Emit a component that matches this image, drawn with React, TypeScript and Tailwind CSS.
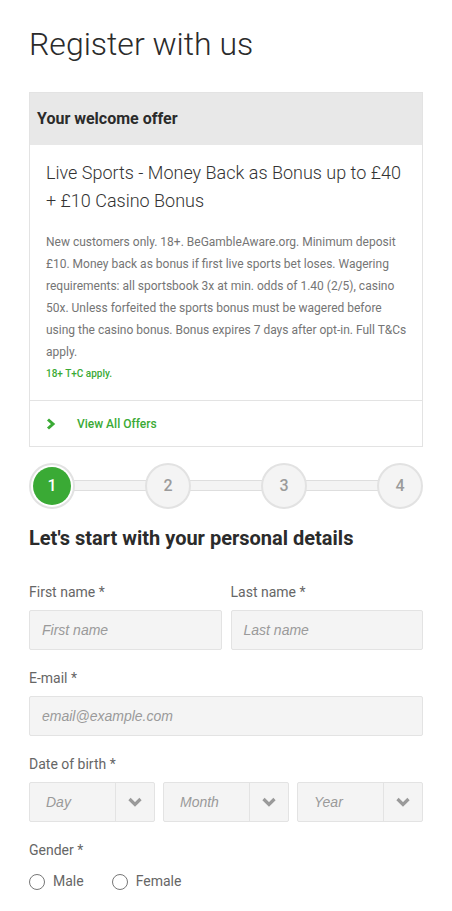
import React from "react";

const Chevron = () => (
  <svg width="14" height="10" viewBox="0 0 14 10" className="block">
    <path d="M1.5 2 L7 7.5 L12.5 2" stroke="#9a9a9a" strokeWidth="3.2" fill="none" strokeLinejoin="miter" />
  </svg>
);

function Select({ label }: { label: string }) {
  return (
    <div className="flex h-10 flex-1 border border-[#e3e3e3] bg-[#f4f4f4] rounded-[2px]">
      <div className="flex flex-1 items-center pl-4 text-[14px] italic text-[#9a9a9a] font-['Liberation_Sans',Arial,sans-serif]">
        {label}
      </div>
      <div className="flex w-[39px] items-center justify-center border-l border-[#e3e3e3]">
        <Chevron />
      </div>
    </div>
  );
}

function Step({ n, active }: { n: number; active?: boolean }) {
  return (
    <div
      className={`relative z-10 flex h-[46px] w-[46px] items-center justify-center rounded-full border-2 border-[#e2e2e2] ${
        active ? "bg-white p-[2px]" : "bg-[#f4f4f4]"
      }`}
    >
      {active ? (
        <div className="flex h-full w-full items-center justify-center rounded-full bg-[#3aaa35] text-[16px] font-medium text-white">
          {n}
        </div>
      ) : (
        <span className="text-[16px] font-medium text-[#9b9b9b]">{n}</span>
      )}
    </div>
  );
}

const inputCls =
  "mt-[8px] flex h-10 items-center rounded-[2px] border border-[#e3e3e3] bg-[#f4f4f4] pl-[12px] text-[14px] italic text-[#9a9a9a] font-['Liberation_Sans',Arial,sans-serif]";

export default function App() {
  return (
    <div className="min-h-[911px] bg-white px-[29px] pt-[24px] font-['Roboto',sans-serif] text-[#333]">
      <h1 className="text-[32px] font-light leading-[40px] text-[#2b2b2b]">Register with us</h1>

      <div className="mt-[28px] border border-[#e3e3e3]">
        <div className="flex h-[52px] items-center bg-[#e8e8e8] px-[7px] pb-[1px] text-[16px] font-bold text-[#2b2b2b]">
          Your welcome offer
        </div>
        <div className="pl-[16px] pr-[14px] pt-[14px] pb-[17px]">
          <div className="pr-[2px] text-[18px] font-light leading-[28px] text-[#333]">
            Live Sports - Money Back as Bonus up to £40 + £10 Casino Bonus
          </div>
          <p className="mt-[16px] text-[12px] leading-[22px] text-[#757575]">
            New customers only. 18+. BeGambleAware.org. Minimum deposit £10. Money back as bonus if first live sports
            bet loses. Wagering requirements: all sportsbook 3x at min. odds of 1.40 (2/5), casino 50x. Unless forfeited
            the sports bonus must be wagered before using the casino bonus. Bonus expires 7 days after opt-in. Full T&amp;Cs
            apply.
          </p>
          <div className="mt-[2px] text-[10px] font-medium leading-[18px] text-[#3aaa35]">18+ T+C apply.</div>
        </div>
        <div className="flex h-[46px] items-center border-t border-[#e3e3e3] pl-[16px]">
          <svg width="10" height="12" viewBox="0 0 10 12" className="mr-[21px]">
            <path d="M2 1.5 L7 6 L2 10.5" stroke="#3aaa35" strokeWidth="3" fill="none" />
          </svg>
          <span className="text-[12px] font-medium text-[#3aaa35]">View All Offers</span>
        </div>
      </div>

      <div className="relative mt-[16px] flex justify-between">
        <div className="absolute left-[20px] right-[20px] top-[17px] h-[11px] border border-[#dedede] bg-[#f4f4f4]" />
        <Step n={1} active />
        <Step n={2} />
        <Step n={3} />
        <Step n={4} />
      </div>

      <h2 className="mt-[15px] text-[20px] font-bold leading-[28px] text-[#2b2b2b]">
        Let's start with your personal details
      </h2>

      <div className="mt-[30px] flex gap-[9px]">
        <div className="flex-1">
          <label className="block text-[14px] leading-[20px] text-[#666]">First name *</label>
          <div className={inputCls}>First name</div>
        </div>
        <div className="flex-1">
          <label className="block text-[14px] leading-[20px] text-[#666]">Last name *</label>
          <div className={inputCls}>Last name</div>
        </div>
      </div>

      <div className="mt-[18px]">
        <label className="block text-[14px] leading-[20px] text-[#666]">E-mail *</label>
        <div className={inputCls}>email@example.com</div>
      </div>

      <div className="mt-[18px]">
        <label className="block text-[14px] leading-[20px] text-[#666]">Date of birth *</label>
        <div className="mt-[8px] flex gap-[8px]">
          <Select label="Day" />
          <Select label="Month" />
          <Select label="Year" />
        </div>
      </div>

      <div className="mt-[18px]">
        <label className="block text-[14px] leading-[20px] text-[#666]">Gender *</label>
        <div className="mt-[11px] flex items-center text-[14px] text-[#666]">
          <span className="h-4 w-4 rounded-full border-[1.5px] border-[#777] bg-white" />
          <span className="ml-[8px]">Male</span>
          <span className="ml-[28px] h-4 w-4 rounded-full border-[1.5px] border-[#777] bg-white" />
          <span className="ml-[8px]">Female</span>
        </div>
      </div>
    </div>
  );
}
